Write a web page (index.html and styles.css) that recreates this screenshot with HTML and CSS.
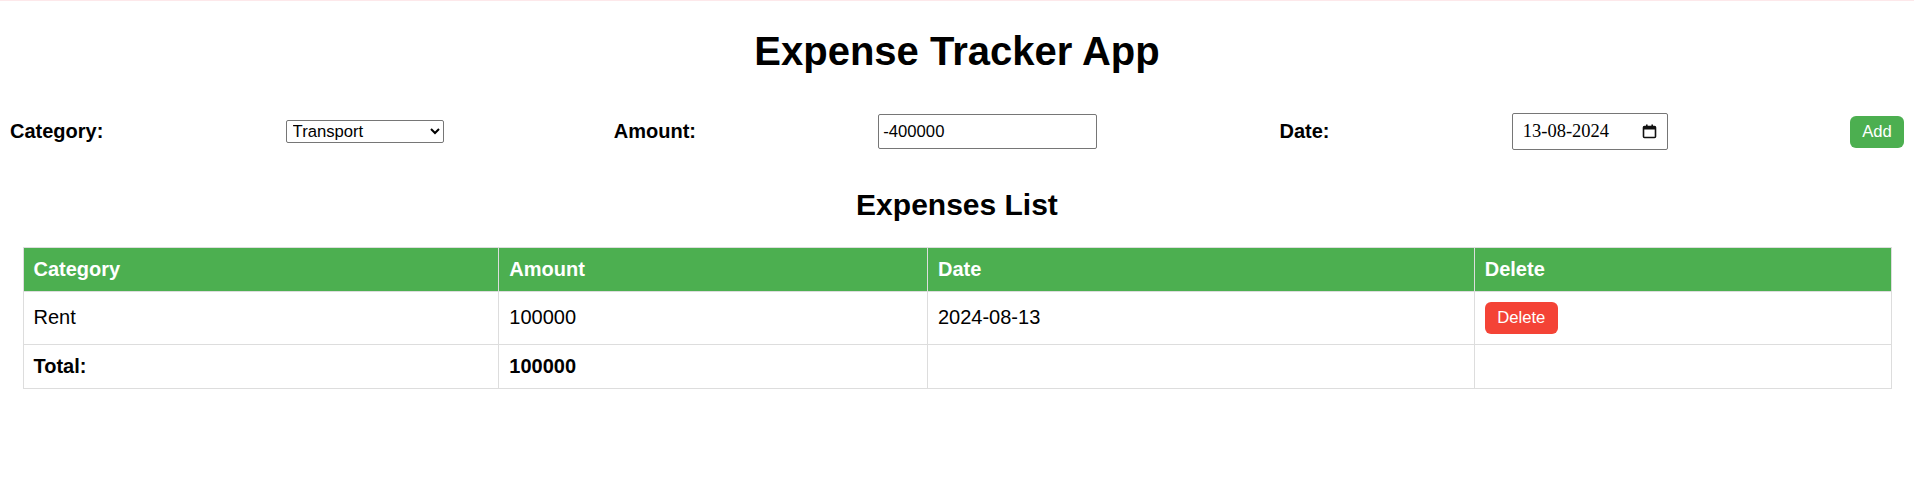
FILE: index.html
```html
<!DOCTYPE html>
<html lang="en">
<head>
<meta charset="utf-8">
<title>Expense Tracker App</title>
<link rel="stylesheet" href="styles.css">
</head>
<body>
<div class="app">
  <h1 class="title">Expense Tracker App</h1>
  <form class="entry-form">
    <label class="field-label" for="category">Category:</label>
    <select id="category" class="select">
      <option>Transport</option>
      <option>Rent</option>
      <option>Entertainment</option>
    </select>
    <label class="field-label" for="amount">Amount:</label>
    <input id="amount" class="text-input" type="text" value="-400000">
    <label class="field-label" for="date">Date:</label>
    <div class="date-field" id="date">
      <span class="date-text">13-08-2024</span>
      <svg class="cal-icon" width="15" height="15" viewBox="0 0 15 15" aria-hidden="true">
        <rect x="1.5" y="2.5" width="12" height="11" rx="1" fill="none" stroke="#111" stroke-width="1.6"/>
        <rect x="1.5" y="2.5" width="12" height="3" fill="#111"/>
        <rect x="4" y="0.5" width="1.6" height="3" fill="#111"/>
        <rect x="9.4" y="0.5" width="1.6" height="3" fill="#111"/>
      </svg>
    </div>
    <button type="button" class="btn btn-add">Add</button>
  </form>

  <h2 class="subtitle">Expenses List</h2>
  <div class="table-wrap">
    <table class="expenses">
      <colgroup>
        <col class="col-cat">
        <col class="col-amt">
        <col class="col-date">
        <col class="col-del">
      </colgroup>
      <thead>
        <tr>
          <th>Category</th>
          <th>Amount</th>
          <th>Date</th>
          <th>Delete</th>
        </tr>
      </thead>
      <tbody>
        <tr>
          <td>Rent</td>
          <td>100000</td>
          <td>2024-08-13</td>
          <td><button type="button" class="btn btn-delete">Delete</button></td>
        </tr>
        <tr class="total-row">
          <td>Total:</td>
          <td>100000</td>
          <td></td>
          <td></td>
        </tr>
      </tbody>
    </table>
  </div>
</div>
</body>
</html>
```

FILE: styles.css
```css
html {
  box-shadow: inset 0 1px 0 #fde8ea;
  background: #fff;
}

body {
  margin: 10px;
  font-family: "Liberation Sans", Arial, sans-serif;
  font-size: 20px;
  color: #000;
}

.title {
  font-size: 40px;
  font-weight: bold;
  text-align: center;
  margin: 19px 0 26.8px;
}

.entry-form {
  display: flex;
  justify-content: space-between;
  align-items: center;
  padding: 12.5px 0;
}

.field-label {
  font-weight: bold;
  font-size: 20px;
}

.select {
  box-sizing: border-box;
  width: 158px;
  height: 23px;
  margin-right: -12px;
  font-family: "Liberation Sans", Arial, sans-serif;
  font-size: 16.67px;
  color: #000;
  background: #fff;
  border: 1px solid #767676;
  border-radius: 2px;
  padding: 0 2px;
}

.text-input {
  box-sizing: border-box;
  width: 219px;
  height: 35px;
  padding: 0 4px;
  font-family: "Liberation Sans", Arial, sans-serif;
  font-size: 16.67px;
  color: #000;
  border: 1px solid #767676;
  border-radius: 2px;
  background: #fff;
}

.date-field {
  box-sizing: border-box;
  width: 156px;
  height: 37px;
  border: 1px solid #767676;
  border-radius: 2px;
  padding: 0 10px 0 10px;
  display: flex;
  align-items: center;
  justify-content: space-between;
  background: #fff;
}

.date-text {
  font-family: "Liberation Serif", "Times New Roman", serif;
  font-size: 18.5px;
  color: #000;
}

.cal-icon {
  display: block;
}

.btn {
  border: none;
  color: #fff;
  font-family: "Liberation Sans", Arial, sans-serif;
  font-size: 16.67px;
  padding: 6.25px 12.5px;
  border-radius: 6px;
  cursor: pointer;
  line-height: normal;
}

.btn-add {
  background: #4caf50;
  width: 54px;
  height: 32px;
  padding: 0;
}

.btn-delete {
  background: #f44336;
  width: 73px;
  height: 32px;
  padding: 0;
  display: block;
}

.subtitle {
  font-size: 30px;
  font-weight: bold;
  text-align: center;
  margin: 24.9px 0;
}

.table-wrap {
  padding: 0 12.5px;
}

.expenses {
  width: 100%;
  border-collapse: collapse;
  table-layout: fixed;
}

.col-cat { width: 25.47%; }
.col-amt { width: 22.95%; }
.col-date { width: 29.27%; }
.col-del { width: 22.31%; }

.expenses th,
.expenses td {
  border: 1px solid #ddd;
  padding: 10px;
  text-align: left;
  font-size: 20px;
}

.expenses th {
  background: #4caf50;
  color: #fff;
  font-weight: bold;
}

.expenses td {
  color: #000;
}

.total-row td {
  font-weight: bold;
}
```
